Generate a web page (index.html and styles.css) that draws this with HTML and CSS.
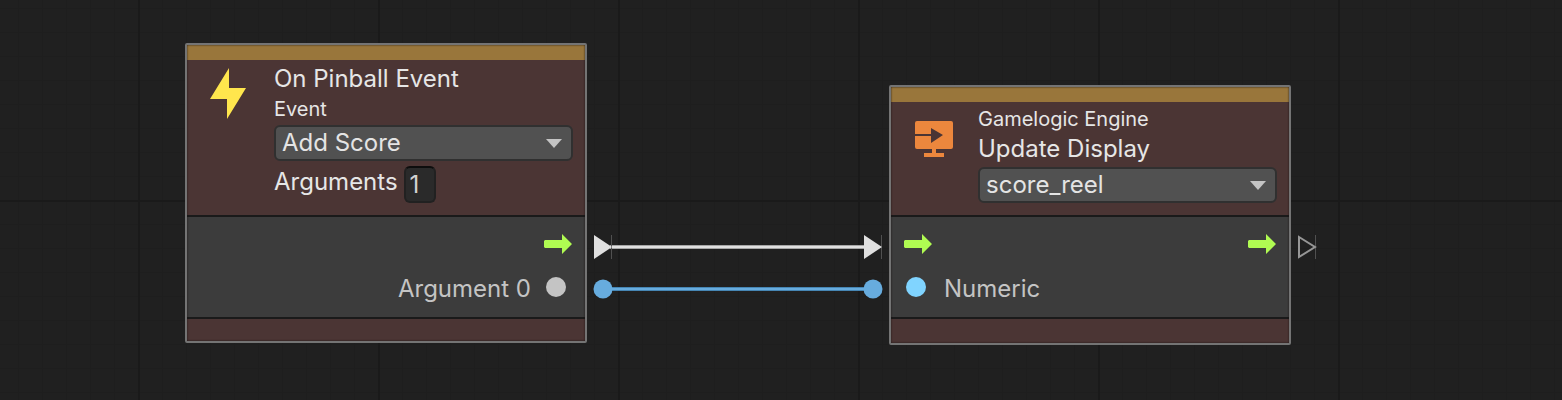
FILE: index.html
```html
<!DOCTYPE html>
<html lang="en">
<head>
<meta charset="utf-8">
<title>Visual Scripting Graph</title>
<link rel="stylesheet" href="styles.css">
</head>
<body>
<main class="canvas">
  <svg class="wires" aria-hidden="true">
    <path d="M610 247H866" stroke="#6a6a6a" stroke-width="4"/>
    <path d="M610 247H866" stroke="#e0e0e0" stroke-width="3"/>
    <path d="M602 289H874" stroke="#4686b4" stroke-width="4"/>
    <path d="M602 289H874" stroke="#67acde" stroke-width="2"/>
    <path d="M611.500 235V259M881.500 235V259M1315.500 235V259" stroke="#505050"/>
    <path d="M594 235L612 247L594 259ZM864 235L882 247L864 259Z" fill="#e0e0e0"/>
    <path d="M1299 237L1315 247L1299 257Z" fill="none" stroke="#969696" stroke-width="2"/>
    <circle cx="603" cy="289" r="9.500" fill="#67acde"/>
    <circle cx="873" cy="289" r="9.500" fill="#67acde"/>
  </svg>

  <section class="node node-event">
    <header class="head">
      <svg class="icon" viewBox="0 0 40 52" aria-hidden="true"><path d="M22 0V20H39L20 51V31H3Z" fill="#ffe64d"/></svg>
      <div class="info">
        <h2 class="title">On Pinball Event</h2>
        <label class="subtitle" for="event">Event</label>
        <div class="dropdown">
          <select id="event"><option>Add Score</option></select>
          <svg class="caret" viewBox="0 0 16 9" aria-hidden="true"><path d="M0 0H16L8 9Z"/></svg>
        </div>
        <div class="field">
          <label class="title" for="args">Arguments</label>
          <input id="args" type="text" value="1">
        </div>
      </div>
    </header>
    <div class="ports">
      <div class="port out"><svg class="flow" viewBox="0 0 28 20" role="img" aria-label="Exit"><path d="M1 6H18V0L28 10L18 20V14H1L0 13V7Z"/></svg></div>
      <div class="port out"><span class="name">Argument 0</span><i class="dot"></i></div>
    </div>
    <div class="foot"></div>
  </section>

  <section class="node node-display">
    <header class="head">
      <svg class="icon" viewBox="0 0 40 52" aria-hidden="true">
        <path d="M3 8H37Q39 8 39 10V34Q39 36 37 36H22V40H30V44H10V40H18V36H3Q1 36 1 34V23H17V30L29 22L17 15V21H1V10Q1 8 3 8Z" fill="#ec873d"/>
      </svg>
      <div class="info">
        <p class="subtitle">Gamelogic Engine</p>
        <label class="title" for="display">Update Display</label>
        <div class="dropdown">
          <select id="display"><option>score_reel</option></select>
          <svg class="caret" viewBox="0 0 16 9" aria-hidden="true"><path d="M0 0H16L8 9Z"/></svg>
        </div>
      </div>
    </header>
    <div class="ports">
      <div class="port both">
        <svg class="flow" viewBox="0 0 28 20" role="img" aria-label="Enter"><path d="M1 6H18V0L28 10L18 20V14H1L0 13V7Z"/></svg>
        <svg class="flow" viewBox="0 0 28 20" role="img" aria-label="Exit"><path d="M1 6H18V0L28 10L18 20V14H1L0 13V7Z"/></svg>
      </div>
      <div class="port"><i class="dot numeric"></i><span class="name">Numeric</span></div>
    </div>
    <div class="foot"></div>
  </section>
</main>
</body>
</html>
```
FILE: styles.css
```css
* { box-sizing: border-box; }

body {
  margin: 0;
  background: #202020;
  color: #e6e6e6;
  font: 24px/32px Inter, sans-serif;
}

.canvas {
  position: relative;
  min-height: 100vh;
  overflow: hidden;
  background-color: #202020;
  background-image:
    linear-gradient(90deg, #1a1a1a 2px, transparent 2px),
    linear-gradient(#1a1a1a 2px, transparent 2px),
    linear-gradient(90deg, #1e1e1e 1px, transparent 1px),
    linear-gradient(#1e1e1e 1px, transparent 1px);
  background-size: 240px 240px, 240px 240px, 24px 24px, 24px 24px;
  background-position: 138px 0, 0 200px, 18px 0, 0 8px;
}

.wires {
  position: absolute;
  inset: 0;
  width: 100%;
  height: 100%;
}

.node {
  position: absolute;
  width: 402px;
  border: 2px solid #747474;
  border-radius: 2px;
  background: #4b3534;
}

.node::after {
  content: "";
  position: absolute;
  inset: 0;
  box-shadow: inset 0 0 2px #1a1212;
  pointer-events: none;
}

.node-event { left: 185px; top: 43px; }
.node-display { left: 889px; top: 85px; }

.head {
  display: flex;
  gap: 27px;
  padding: 3px 12px 12px 20px;
  border-top: 15px solid #99763b;
}

.icon {
  flex: none;
  width: 40px;
  height: 52px;
  margin-top: 5px;
}

.node-display .icon { margin-top: 8px; margin-left: 3px; margin-right: -3px; }

.info {
  flex: 1;
  display: flex;
  flex-direction: column;
}

.title,
.subtitle {
  margin: 0;
  font-weight: inherit;
}

.title { font-size: 24px; line-height: 32px; }
.subtitle { font-size: 20px; line-height: 28px; }

.dropdown {
  display: grid;
  align-items: center;
  margin-top: 2px;
}

.dropdown > * { grid-area: 1 / 1; }

select {
  appearance: none;
  width: 100%;
  height: 36px;
  padding: 0 32px 0 6px;
  border: 2px solid #303030;
  border-radius: 6px;
  background: #515151;
  color: #e4e4e4;
  font: inherit;
}

.caret {
  justify-self: end;
  width: 16px;
  height: 9px;
  margin-right: 11px;
  fill: #c4c4c4;
  pointer-events: none;
}

.field {
  display: flex;
  gap: 6px;
  margin-top: 5px;
}

input {
  width: 32px;
  height: 37px;
  padding: 0 4px;
  border: 2px solid #212121;
  border-top-color: #0d0d0d;
  border-radius: 6px;
  background: #2a2a2a;
  color: #d2d2d2;
  font: inherit;
}

.ports {
  padding: 6px 13px;
  border: solid #1a1a1a;
  border-width: 2px 0;
  background: #3c3c3c;
  color: #c4c4c4;
}

.port {
  display: flex;
  align-items: center;
  height: 42px;
}

.port + .port { height: 44px; margin-bottom: 2px; }
.out { justify-content: flex-end; }
.both { justify-content: space-between; }
.name { padding-top: 4px; }

.flow {
  width: 28px;
  height: 20px;
  fill: #b0fb52;
}

.dot {
  width: 20px;
  height: 20px;
  margin: 0 6px 0 15px;
  border-radius: 50%;
  background: #c4c4c4;
}

.dot.numeric {
  margin: 0 18px 0 2px;
  background: #80d4ff;
}

.foot { height: 22px; }
.node-display .foot { height: 24px; }
```
